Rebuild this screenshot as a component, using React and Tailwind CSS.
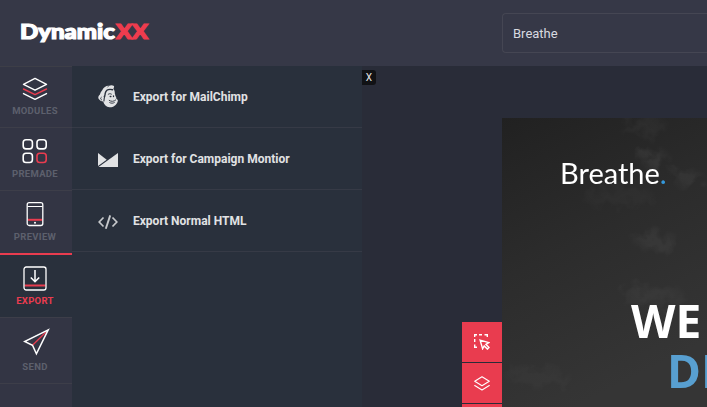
import React from "react";

function ModulesIcon() {
  return (
    <svg width="26" height="24" viewBox="0 0 26 24" fill="none" strokeWidth="1.4" strokeLinejoin="round" strokeLinecap="round" className="block">
      <path d="M13 1.4 24.5 7.4 13 13.2 1.5 7.4Z" stroke="#fff" />
      <path d="M1.5 12 13 17.6 24.5 12" stroke="#e93c4f" />
      <path d="M1.5 16.6 13 22.4 24.5 16.6" stroke="#fff" />
    </svg>
  );
}

function PremadeIcon() {
  return (
    <svg width="26" height="26" viewBox="0 0 26 26" fill="none" stroke="#fff" strokeWidth="1.6" className="block">
      <rect x="1.2" y="1.7" width="9.2" height="9.2" rx="2.8" />
      <rect x="15" y="1.7" width="9.2" height="9.2" rx="2.8" />
      <rect x="1.2" y="15.3" width="9.2" height="9.2" rx="2.8" />
      <rect x="15" y="15.3" width="9.2" height="9.2" rx="2.8" stroke="#e93c4f" />
    </svg>
  );
}

function PreviewIcon() {
  return (
    <svg width="18" height="26" viewBox="0 0 18 26" fill="none" stroke="#fff" strokeWidth="1.3" className="block">
      <path d="M2 18.8H16" stroke="#e93c4f" strokeWidth="2" />
      <rect x="1.2" y="1.7" width="15.6" height="22.8" rx="2" />
      <path d="M1.5 5.5H16.5" strokeWidth="1" />
      <circle cx="9" cy="21.8" r="1" fill="#fff" stroke="none" />
    </svg>
  );
}

function ExportIcon() {
  return (
    <svg width="24" height="25" viewBox="0 0 24 25" fill="none" stroke="#fff" strokeWidth="1.3" className="block">
      <path d="M1.5 19.5H22.5" stroke="#e93c4f" strokeWidth="2" />
      <rect x="1" y="1" width="22" height="23" rx="2.2" />
      <path d="M12 4V15.5M7.8 11.5 12 15.8 16.2 11.5" strokeWidth="1.5" />
    </svg>
  );
}

function SendIcon() {
  return (
    <svg width="27" height="28" viewBox="0 0 27 28" fill="none" stroke="#fff" strokeWidth="1.5" strokeLinejoin="miter" className="ml-[3px] block">
      <path d="M9.5 17.3 23 4" stroke="#e93c4f" strokeWidth="1.3" />
      <path d="M25.2 1.8 1.6 13.5 9.5 17.3 13.4 25.8Z" />
    </svg>
  );
}

function MailChimpIcon() {
  return (
    <svg width="20" height="23" viewBox="0 0 20 23" fill="none" className="block">
      <path fill="#e1e2e4" d="M4.2 5.2C5.8 2.2 8.4.4 11 .8c1.2-.8 3.6-.9 5 .1.3 1.1-.2 2-.6 2.9 1 1.4 1.5 3 1.4 4.6.3.7.6 1.600.6 2.500 1 1.200 1 2.200 1 3.200 1.500.4 1.700 1.500 1.200 2.600-1.200 3.700-4.700 5.800-8.200 5.500-3.100-.3-5.300-2.500-6.200-5.700-2-.1-3.600-1.100-4.600-2.700-.7-1.500-.1-3.100 1.200-4.100C2.300 7.900 3.100 6.500 4.200 5.200Z" />
      <g stroke="#29303c" strokeLinecap="round">
        <path d="M14.600 4.700C10.500 3.800 7.900 5.300 7.200 8.300c-.2 1.300.1 2.200-.9 3.200" strokeWidth="1.400" />
        <path d="M6.800 11.500c-.9 1.300-.5 3.100-.9 4.500" strokeWidth="1.100" />
        <path d="M3.200 12.300c-1 .5-.7 2 .3 2.600" strokeWidth=".9" />
        <path d="M10.200 9.300c1-.8 2.200-.8 3.200-.2" strokeWidth=".9" />
        <path d="M12.200 11.500h.7M15.500 10.900v.7" strokeWidth="1.300" />
        <path d="M11.200 15.400c2.200 1.500 4.600 1.200 6.500-.4M11.700 17.600c1.500.9 3.200.8 4.600 0" strokeWidth=".9" />
        <path d="M10.800.8 9.700 2.100" strokeWidth=".6" />
      </g>
    </svg>
  );
}

function CampaignIcon() {
  return (
    <svg width="20" height="14" viewBox="0 0 20 14" fill="#e1e2e4" className="mt-[2px] block">
      <path d="M0 0 8.7 6.8 0 13Z" />
      <path d="M20 0V14H.5Z" />
    </svg>
  );
}

function CodeIcon() {
  return (
    <svg width="20" height="14" viewBox="0 0 20 14" fill="none" stroke="#c7c9cc" strokeWidth="1.7" className="mt-[2px] block">
      <path d="M5.500 2.500 1.200 7 5.500 11.500M14.500 2.500 18.800 7 14.500 11.500" />
      <path d="M12.200 .4 7.800 13.700" strokeWidth="1.9" />
    </svg>
  );
}

function SelectIcon() {
  return (
    <svg width="16" height="16" viewBox="0 0 16 16" fill="none" stroke="#fff" strokeWidth="1.4" className="block">
      <path d="M.7 3V.7H3M5 .7H8M10.500 .7H13.300V3M.7 5V8M.7 10.500V13.300H3" />
      <path d="M6.100 6.100 14.800 8.600 11.900 10.300 15 13.500 13.400 15.100 10.200 11.900 8.600 14.800Z" />
    </svg>
  );
}

function LayersIcon() {
  return (
    <svg width="16" height="15" viewBox="0 0 16 15" fill="none" stroke="#fff" strokeWidth="1.100" strokeLinejoin="round" strokeLinecap="round" className="block">
      <path d="M8 .8 15.300 5.300 8 9.700.7 5.300Z" />
      <path d="M.7 9.500 8 14 15.300 9.500" />
    </svg>
  );
}

function CloudySky() {
  return (
    <svg width="205" height="289" viewBox="0 0 205 289" className="absolute inset-0">
      <defs>
        <linearGradient id="sky" x1="0" y1="0" x2=".35" y2="1">
          <stop offset="0" stopColor="#212121" />
          <stop offset=".5" stopColor="#2c2c2c" />
          <stop offset="1" stopColor="#353535" />
        </linearGradient>
        <filter id="haze" x="-20%" y="-20%" width="140%" height="140%">
          <feTurbulence type="fractalNoise" baseFrequency=".07" numOctaves="3" seed="4" result="noise" />
          <feGaussianBlur in="SourceGraphic" stdDeviation="5" result="soft" />
          <feDisplacementMap in="soft" in2="noise" scale="26" />
        </filter>
      </defs>
      <rect width="205" height="289" fill="url(#sky)" />
      <g fill="#fff" filter="url(#haze)">
        <ellipse cx="140" cy="7" rx="24" ry="7" opacity=".04" />
        <ellipse cx="153" cy="42" rx="12" ry="8" opacity=".07" />
        <ellipse cx="186" cy="60" rx="13" ry="7" opacity=".06" />
        <ellipse cx="115" cy="78" rx="38" ry="9" opacity=".025" />
        <ellipse cx="155" cy="124" rx="20" ry="8" opacity=".05" />
        <ellipse cx="150" cy="178" rx="32" ry="8" opacity=".04" />
        <ellipse cx="35" cy="259" rx="35" ry="5" opacity=".03" />
      </g>
    </svg>
  );
}

const navItems = [
  { label: "MODULES", icon: <ModulesIcon />, box: "h-[61px] border-t border-[#3d3e47] pt-[10px]", text: "mt-[3px]" },
  { label: "PREMADE", icon: <PremadeIcon />, box: "h-[63px] border-t border-[#3d3e49] pt-[10px]", text: "mt-[3px]" },
  { label: "PREVIEW", icon: <PreviewIcon />, box: "h-[63px] border-t border-[#3d3e49] pt-[10px]", text: "mt-[3px]" },
  { label: "EXPORT", icon: <ExportIcon />, box: "h-[64px] border-t-2 border-[#e93c4f] bg-[#29303c] pt-[11px]", text: "mt-[3px]", active: true },
  { label: "SEND", icon: <SendIcon />, box: "h-[66px] border-t border-[#3d3e49] pt-[10px]", text: "mt-[4px]" },
];

const exportOptions = [
  { label: "Export for MailChimp", icon: <MailChimpIcon /> },
  { label: "Export for Campaign Montior", icon: <CampaignIcon /> },
  { label: "Export Normal HTML", icon: <CodeIcon /> },
];

export default function App() {
  return (
    <div className="flex h-[407px] w-[707px] flex-col overflow-hidden bg-[#292c38] font-[Roboto,sans-serif]">
      <header className="flex h-[66px] shrink-0 justify-between bg-[#363847]">
        <svg width="140" height="30" viewBox="0 0 140 30" className="ml-[14px] mt-[17px]" role="img" aria-label="DynamicXX">
          <text x="6" y="21.700" textLength="95" lengthAdjust="spacingAndGlyphs" fontFamily="Lato, sans-serif" fontWeight="900" fontSize="20.500" fill="#fff" stroke="#fff" strokeWidth="1.200">Dynamic</text>
          <text x="102" y="21.700" textLength="32" lengthAdjust="spacingAndGlyphs" fontFamily="Lato, sans-serif" fontWeight="900" fontSize="20.500" fill="#ee3c4e" stroke="#ee3c4e" strokeWidth="1.200">XX</text>
        </svg>
        <div className="mt-[13px] flex h-[40px] w-[205px] items-center rounded-l-[4px] border border-r-0 border-[#454653] pl-[10px] pt-px text-[13px] text-[#d9dae0]">
          Breathe
        </div>
      </header>

      <div className="flex min-h-0 flex-1">
        <nav className="flex w-[72px] shrink-0 flex-col bg-[#333544]">
          {navItems.map((item) => (
            <div key={item.label} className={`flex shrink-0 flex-col items-center pr-[2px] ${item.box}`}>
              {item.icon}
              <span className={`text-[9.5px] font-bold leading-[13px] tracking-[0.3px] ${item.text} ${item.active ? "text-[#e93c4f]" : "text-[#5d606d]"}`}>
                {item.label}
              </span>
            </div>
          ))}
          <div className="border-t border-[#3d3e49]" />
        </nav>

        <aside className="w-[290px] shrink-0 bg-[#29303c]">
          {exportOptions.map((option) => (
            <div key={option.label} className="flex h-[62px] items-center border-b border-[#363a46] pl-[26px]">
              <div className="flex w-[20px] justify-center">{option.icon}</div>
              <span className="ml-[15px] text-[12px] font-bold leading-[16px] text-[#e1e2e4]">{option.label}</span>
            </div>
          ))}
        </aside>

        <main className="flex min-w-0 flex-1">
          <button className="mt-[4px] flex h-[15px] w-[14px] items-center justify-center rounded-r-[3px] bg-[#111215] text-[10px] leading-none text-[#e4e4e4]">
            X
          </button>
          <div className="ml-[86px] mt-[256px] flex w-[40px] shrink-0 flex-col gap-px">
            <div className="flex h-[40px] shrink-0 items-center justify-center bg-[#e93c4f]"><SelectIcon /></div>
            <div className="flex h-[40px] shrink-0 items-center justify-center bg-[#e93c4f]"><LayersIcon /></div>
            <div className="h-[4px] shrink-0 bg-[#e93c4f]" />
          </div>
          <section className="relative mt-[52px] w-[205px] shrink-0 overflow-hidden bg-[#2b2b2b]">
            <CloudySky />
            <div className="relative whitespace-nowrap">
              <div className="ml-[58px] pt-[35px] font-[Lato,sans-serif] text-[29px] leading-[40px] text-white">
                Breathe<span className="text-[#3498db]">.</span>
              </div>
              <div className="ml-[129px] mt-[102px] font-['Open_Sans',sans-serif] text-[46px] font-bold leading-[50px] text-white">WE</div>
              <div className="ml-[165px] font-['Open_Sans',sans-serif] text-[46px] font-bold leading-[50px] text-[#589fd0]">DE</div>
            </div>
          </section>
        </main>
      </div>
    </div>
  );
}
